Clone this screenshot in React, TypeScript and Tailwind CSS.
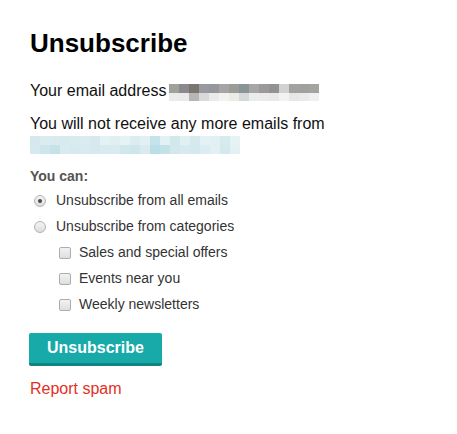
const emailTop = ["#a0a19b", "#8c8890", "#7a7570", "#9a999d", "#96979a", "#a8a3a5", "#9a9c96", "#8a9494", "#a6a7a5", "#9d9899", "#929293", "#d1d1d1", "#a2a2a0", "#a0a09d", "#a3a39f"];
const emailBottom = ["#ebebeb", "#eaeaea", "#b9b5b3", "#d8d9db", "#eaeaea", "#f3f2f0", "#ebebe8", "#d4d9db", "#ececec", "#ebebeb", "#e9e9e9", "#f0f2f4", "#e7e7e7", "#eaeaea", "#f0f0f0"];
const senderTop = ["#d4e8ed", "#dbecf0", "#d9ebef", "#d7eaee", "#d9ebef", "#dbecf0", "#d6e9ee", "#e4f2f5", "#e0eff2", "#e6f3f5", "#dcedf1", "#e2f0f3", "#c5e3ea", "#e3f1f4", "#d1e8ed", "#e1f0f3", "#d6eaee", "#e5f2f5", "#e1f0f3", "#d7eaee", "#e6f3f5"];
const senderBottom = ["#d5e9ee", "#cde5eb", "#c5e2e9", "#d8ebef", "#d5e9ee", "#d9ebef", "#d5e9ee", "#d9ebef", "#d9ebef", "#d0e7ec", "#cde5eb", "#d9ebef", "#bbdee7", "#c3e1e8", "#d2e8ed", "#d7eaee", "#d3e9ee", "#dcedf1", "#e2f0f3", "#d4e9ee", "#e4f1f4"];

// pixelated (redacted) strip
function Redacted({ top, bottom, h1, h2 }: { top: string[]; bottom: string[]; h1: number; h2: number }) {
  const w = top.length * 10;
  return (
    <svg width={w} height={h1 + h2} className="block shrink-0">
      {top.map((c, i) => (
        <rect key={"t" + i} x={i * 10} y={0} width={10} height={h1} fill={c} />
      ))}
      {bottom.map((c, i) => (
        <rect key={"b" + i} x={i * 10} y={h1} width={10} height={h2} fill={c} />
      ))}
    </svg>
  );
}

function Radio({ checked, label }: { checked?: boolean; label: string }) {
  return (
    <label className="flex items-center h-[26px]">
      <span className="ml-[4px] mt-[2px] w-[12px] h-[12px] rounded-full border border-[#b3b3b3] bg-gradient-to-b from-[#f4f4f4] to-[#dcdcdc] flex items-center justify-center">
        {checked && <span className="w-[4px] h-[4px] rounded-full bg-[#4a4a4a]" />}
      </span>
      <span className="ml-[10px]">{label}</span>
    </label>
  );
}

function Check({ label }: { label: string }) {
  return (
    <label className="flex items-center h-[26px] pl-[29px]">
      <span className="w-[12px] h-[12px] mt-[1px] rounded-[2px] border border-[#adadad] bg-gradient-to-b from-[#f2f2f2] to-[#dedede]" />
      <span className="ml-[8px]">{label}</span>
    </label>
  );
}

export default function App() {
  return (
    <main className="min-h-screen bg-white px-[30px] pt-[28px] font-['Liberation_Sans',Arial,sans-serif] text-[#111]">
      <h1 className="text-[26px] leading-[30px] font-bold text-black">Unsubscribe</h1>

      <p className="mt-[24px] flex items-start text-[16px] leading-[18px]">
        <span>Your email address&nbsp;</span>
        <span className="mt-[2px] -ml-[2px]">
          <Redacted top={emailTop} bottom={emailBottom} h1={9} h2={8} />
        </span>
      </p>

      <div className="mt-[14px] text-[16px] leading-[18px]">
        <p>You will not receive any more emails from</p>
        <div className="mt-[3px]">
          <Redacted top={senderTop} bottom={senderBottom} h1={9} h2={9} />
        </div>
      </div>

      <h2 className="mt-[14px] text-[14px] leading-[16px] font-bold text-[#555]">You can:</h2>

      <div className="mt-[3px] flex flex-col text-[14px] text-[#333]">
        <Radio checked label="Unsubscribe from all emails" />
        <Radio label="Unsubscribe from categories" />
        <Check label="Sales and special offers" />
        <Check label="Events near you" />
        <Check label="Weekly newsletters" />
      </div>

      <button className="mt-[16px] -ml-px w-[133px] h-[33px] rounded-[2px] bg-[#17aaa8] border-b-[3px] border-[#0f8583] text-white text-[16px] font-bold leading-[18px] flex items-center justify-center">
        Unsubscribe
      </button>

      <a href="#" className="block mt-[14px] text-[16px] leading-[18px] text-[#e2301f]">
        Report spam
      </a>
    </main>
  );
}
